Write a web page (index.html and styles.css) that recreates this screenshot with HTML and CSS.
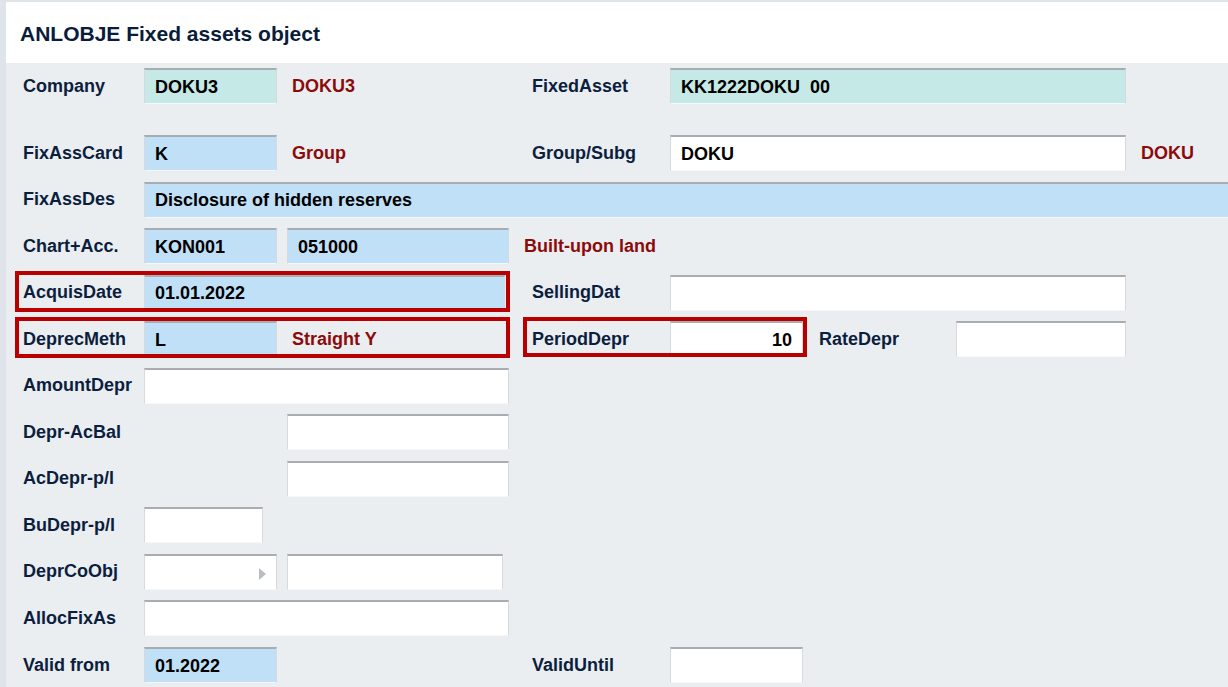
FILE: index.html
```html
<!DOCTYPE html>
<html>
<head>
<meta charset="utf-8">
<link rel="stylesheet" href="styles.css">
</head>
<body>
<div class="app">
  <div class="header"><h1 class="title">ANLOBJE Fixed assets object</h1></div>
  <div class="form">
    <div class="row first">
      <div class="left">
        <span class="lbl">Company</span>
        <span class="inp teal w133">DOKU3</span>
        <span class="desc">DOKU3</span>
      </div>
      <div class="right">
        <span class="lbl rl">FixedAsset</span>
        <span class="inp teal w456">KK1222DOKU&nbsp; 00</span>
      </div>
    </div>
    <div class="row">
      <div class="left">
        <span class="lbl">FixAssCard</span>
        <span class="inp blue w133">K</span>
        <span class="desc">Group</span>
      </div>
      <div class="right">
        <span class="lbl rl">Group/Subg</span>
        <span class="inp w456">DOKU</span>
        <span class="desc">DOKU</span>
      </div>
    </div>
    <div class="row">
      <span class="lbl">FixAssDes</span>
      <span class="inp blue wide">Disclosure of hidden reserves</span>
    </div>
    <div class="row">
      <span class="lbl">Chart+Acc.</span>
      <span class="inp blue w133">KON001</span>
      <span class="inp blue w222 ml10">051000</span>
      <span class="desc">Built-upon land</span>
    </div>
    <div class="row">
      <div class="left hl">
        <span class="lbl">AcquisDate</span>
        <span class="inp blue w361">01.01.2022</span>
      </div>
      <div class="right">
        <span class="lbl rl">SellingDat</span>
        <span class="inp w456"></span>
      </div>
    </div>
    <div class="row">
      <div class="left hl">
        <span class="lbl">DeprecMeth</span>
        <span class="inp blue w133">L</span>
        <span class="desc">Straight Y</span>
      </div>
      <div class="right">
        <div class="hlr">
          <span class="lbl rl">PeriodDepr</span>
          <span class="inp w133 num">10</span>
        </div>
        <span class="lbl rate">RateDepr</span>
        <span class="inp w170"></span>
      </div>
    </div>
    <div class="row">
      <span class="lbl">AmountDepr</span>
      <span class="inp w365"></span>
    </div>
    <div class="row">
      <span class="lbl">Depr-AcBal</span>
      <span class="inp w222 ml143"></span>
    </div>
    <div class="row">
      <span class="lbl">AcDepr-p/l</span>
      <span class="inp w222 ml143"></span>
    </div>
    <div class="row">
      <span class="lbl">BuDepr-p/l</span>
      <span class="inp w119"></span>
    </div>
    <div class="row">
      <span class="lbl">DeprCoObj</span>
      <span class="inp w133 sel"><span class="arrow"></span></span>
      <span class="inp w216 ml10"></span>
    </div>
    <div class="row">
      <span class="lbl">AllocFixAs</span>
      <span class="inp w365"></span>
    </div>
    <div class="row">
      <div class="left">
        <span class="lbl">Valid from</span>
        <span class="inp blue w133">01.2022</span>
      </div>
      <div class="right">
        <span class="lbl rl">ValidUntil</span>
        <span class="inp w133"></span>
      </div>
    </div>
  </div>
</div>
</body>
</html>
```

FILE: styles.css
```css
html, body {
  margin: 0;
  padding: 0;
  height: 100%;
  overflow: hidden;
}
body {
  background: #dfe4ea;
  font-family: "Liberation Sans", Arial, sans-serif;
  font-weight: bold;
  font-size: 18px;
  color: #0c1e3e;
}
.app {
  margin: 2px 0 0 6px;
  height: calc(100% - 2px);
  display: flex;
  flex-direction: column;
}
.header {
  height: 61px;
  background: #ffffff;
  display: flex;
  align-items: center;
  padding-left: 14px;
}
.title {
  margin: 0;
  font-size: 21px;
  font-weight: bold;
  color: #0a1c3c;
  padding-top: 2px;
}
.form {
  flex: 1;
  background: #ebeef1;
  padding: 5px 0 0 17px;
  overflow: hidden;
}
.row {
  display: flex;
  align-items: center;
  height: 36px;
  margin-bottom: 10.55px;
  white-space: nowrap;
}
.row.first {
  margin-bottom: 31px;
}
.left {
  width: 509px;
  flex: none;
  display: flex;
  align-items: center;
  height: 36px;
  position: relative;
}
.right {
  display: flex;
  align-items: center;
  height: 36px;
}
.lbl {
  width: 121px;
  flex: none;
}
.lbl.rl {
  width: 138px;
}
.lbl.rate {
  width: 137px;
  margin-left: 16px;
}
.inp {
  box-sizing: border-box;
  flex: none;
  height: 36px;
  display: flex;
  align-items: center;
  padding: 1px 10px 0 10px;
  background: #ffffff;
  color: #000000;
  border: 1px solid #d6d9dd;
  border-top: 2px solid #a9acb0;
  border-bottom-color: #f6f7f8;
  overflow: hidden;
  position: relative;
}
.inp.teal { background: #c5e9e6; }
.inp.blue { background: #c0e0f7; }
.inp.num { justify-content: flex-end; }
.w119 { width: 119px; }
.w133 { width: 133px; }
.w170 { width: 170px; }
.w216 { width: 216px; }
.w222 { width: 222px; }
.w361 { width: 361px; }
.w365 { width: 365px; }
.w456 { width: 456px; }
.wide { width: 1120px; }
.ml10 { margin-left: 10px; }
.ml143 { margin-left: 143px; }
.desc {
  color: #8b0a0a;
  margin-left: 15px;
}
.arrow {
  position: absolute;
  right: 10px;
  top: 12px;
  width: 0;
  height: 0;
  border-top: 6px solid transparent;
  border-bottom: 6px solid transparent;
  border-left: 7px solid #b9bdc2;
}
.hl::after {
  content: "";
  position: absolute;
  left: -8px;
  width: 495px;
  top: -4px;
  bottom: -1px;
  border: 4px solid #b80000;
  box-sizing: border-box;
  pointer-events: none;
}
.hlr {
  display: flex;
  align-items: center;
  position: relative;
}
.hlr::after {
  content: "";
  position: absolute;
  left: -9px;
  right: -4px;
  top: -4px;
  bottom: 0px;
  border: 4px solid #b80000;
  box-sizing: border-box;
  pointer-events: none;
}
```
